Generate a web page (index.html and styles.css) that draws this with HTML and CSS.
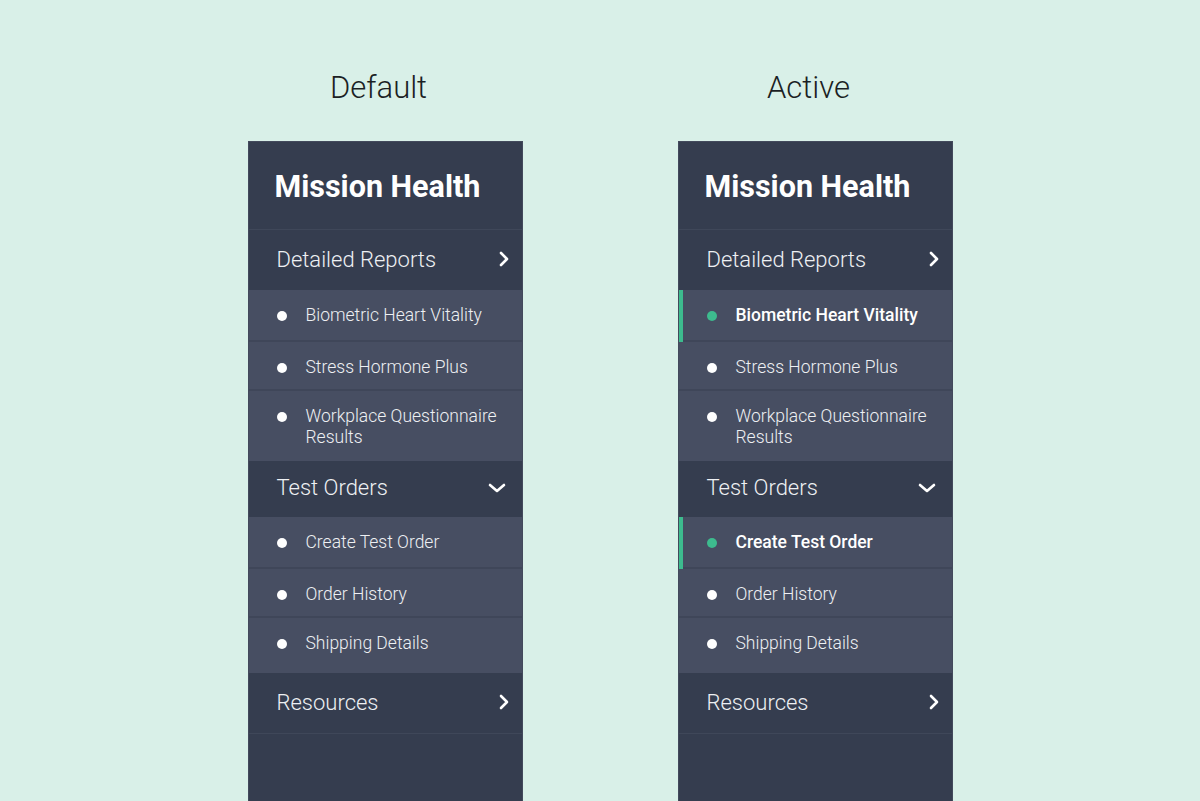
FILE: index.html
```html
<!DOCTYPE html>
<html lang="en">
<head>
<meta charset="utf-8">
<title>Mission Health Nav</title>
<link rel="stylesheet" href="styles.css">
</head>
<body>
<div class="stage">
  <section class="col">
    <h2 class="state">Default</h2>
    <nav class="panel">
      <div class="brand">Mission Health</div>
      <div class="sec">
        <span>Detailed Reports</span>
        <svg class="chev-r" viewBox="0 0 10 16" width="10" height="16"><path d="M2 2 L8 8 L2 14" fill="none" stroke="#fff" stroke-width="2.6" stroke-linecap="round" stroke-linejoin="round"/></svg>
      </div>
      <ul class="subs">
        <li class="sub"><i class="dot"></i><span>Biometric Heart Vitality</span></li>
        <li class="sub"><i class="dot"></i><span>Stress Hormone Plus</span></li>
        <li class="sub"><i class="dot"></i><span>Workplace Questionnaire Results</span></li>
      </ul>
      <div class="sec sec-open">
        <span>Test Orders</span>
        <svg class="chev-d" viewBox="0 0 18 10" width="18" height="10"><path d="M2 2 L9 8 L16 2" fill="none" stroke="#fff" stroke-width="2.6" stroke-linecap="round" stroke-linejoin="round"/></svg>
      </div>
      <ul class="subs">
        <li class="sub"><i class="dot"></i><span>Create Test Order</span></li>
        <li class="sub"><i class="dot"></i><span>Order History</span></li>
        <li class="sub tail"><i class="dot"></i><span>Shipping Details</span></li>
      </ul>
      <div class="sec sec-last">
        <span>Resources</span>
        <svg class="chev-r" viewBox="0 0 10 16" width="10" height="16"><path d="M2 2 L8 8 L2 14" fill="none" stroke="#fff" stroke-width="2.6" stroke-linecap="round" stroke-linejoin="round"/></svg>
      </div>
    </nav>
  </section>

  <section class="col">
    <h2 class="state">Active</h2>
    <nav class="panel">
      <div class="brand">Mission Health</div>
      <div class="sec">
        <span>Detailed Reports</span>
        <svg class="chev-r" viewBox="0 0 10 16" width="10" height="16"><path d="M2 2 L8 8 L2 14" fill="none" stroke="#fff" stroke-width="2.6" stroke-linecap="round" stroke-linejoin="round"/></svg>
      </div>
      <ul class="subs">
        <li class="sub active"><i class="dot"></i><span>Biometric Heart Vitality</span></li>
        <li class="sub"><i class="dot"></i><span>Stress Hormone Plus</span></li>
        <li class="sub"><i class="dot"></i><span>Workplace Questionnaire Results</span></li>
      </ul>
      <div class="sec sec-open">
        <span>Test Orders</span>
        <svg class="chev-d" viewBox="0 0 18 10" width="18" height="10"><path d="M2 2 L9 8 L16 2" fill="none" stroke="#fff" stroke-width="2.6" stroke-linecap="round" stroke-linejoin="round"/></svg>
      </div>
      <ul class="subs">
        <li class="sub active"><i class="dot"></i><span>Create Test Order</span></li>
        <li class="sub"><i class="dot"></i><span>Order History</span></li>
        <li class="sub tail"><i class="dot"></i><span>Shipping Details</span></li>
      </ul>
      <div class="sec sec-last">
        <span>Resources</span>
        <svg class="chev-r" viewBox="0 0 10 16" width="10" height="16"><path d="M2 2 L8 8 L2 14" fill="none" stroke="#fff" stroke-width="2.6" stroke-linecap="round" stroke-linejoin="round"/></svg>
      </div>
    </nav>
  </section>
</div>
</body>
</html>
```

FILE: styles.css
```css
* { box-sizing: border-box; }
html, body { margin: 0; padding: 0; }
body {
  background: #d9f0e8;
  font-family: Roboto, "Liberation Sans", sans-serif;
  width: 1200px;
  height: 801px;
  overflow: hidden;
}
.stage {
  display: flex;
  justify-content: center;
  gap: 155px;
  height: 801px;
}
.col {
  width: 275px;
  display: flex;
  flex-direction: column;
}
.state {
  margin: 0;
  padding: 69px 13px 0 0;
  height: 141px;
  text-align: center;
  font-weight: 300;
  font-size: 31px;
  line-height: 38px;
  color: #1b1f24;
}
.panel {
  flex: 1;
  background: #353d4f;
  border: 1px solid #434a5c;
  border-bottom: 0;
  color: #fff;
}
.brand {
  height: 87px;
  padding: 28px 0 0 26px;
  font-size: 30.5px;
  font-weight: 700;
  line-height: 34px;
}
.sec {
  display: flex;
  align-items: center;
  justify-content: space-between;
  height: 61px;
  padding: 0 13px 2px 28px;
  border-top: 1px solid #3f4759;
  font-size: 22px;
  font-weight: 300;
  color: #eef0f3;
}
.sec-open {
  height: 56px;
  border-top: 0;
  padding-right: 16px;
  padding-bottom: 4px;
}
.sec-last {
  height: 61px;
  border-top: 0;
  border-bottom: 1px solid #3f4759;
}
.chev-r { display: block; margin-top: -1px; }
.chev-d { display: block; margin-top: 2px; }
.subs {
  list-style: none;
  margin: 0;
  padding: 0;
  background: #474e62;
}
.sub {
  position: relative;
  display: flex;
  align-items: flex-start;
  padding: 15px 20px 11px 28px;
  border-bottom: 2px solid #3f4659;
  font-size: 17.5px;
  font-weight: 300;
  line-height: 21px;
  color: #eef0f3;
}
.sub:first-child { padding-top: 15px; padding-bottom: 14px; }
.sub:last-child { border-bottom: 0; padding-top: 15px; padding-bottom: 13px; }
.sub.tail { padding-top: 15px; padding-bottom: 19px; }
.dot {
  flex: none;
  width: 10px;
  height: 10px;
  border-radius: 50%;
  background: #fff;
  margin: 6px 19px 0 0;
}
.sub.active {
  font-weight: 500;
  color: #fff;
}
.sub.active::before {
  content: "";
  position: absolute;
  left: 0;
  top: 0;
  bottom: -2px;
  width: 4px;
  background: #3dbb8e;
}
.sub.active .dot { background: #3dbb8e; }
```
